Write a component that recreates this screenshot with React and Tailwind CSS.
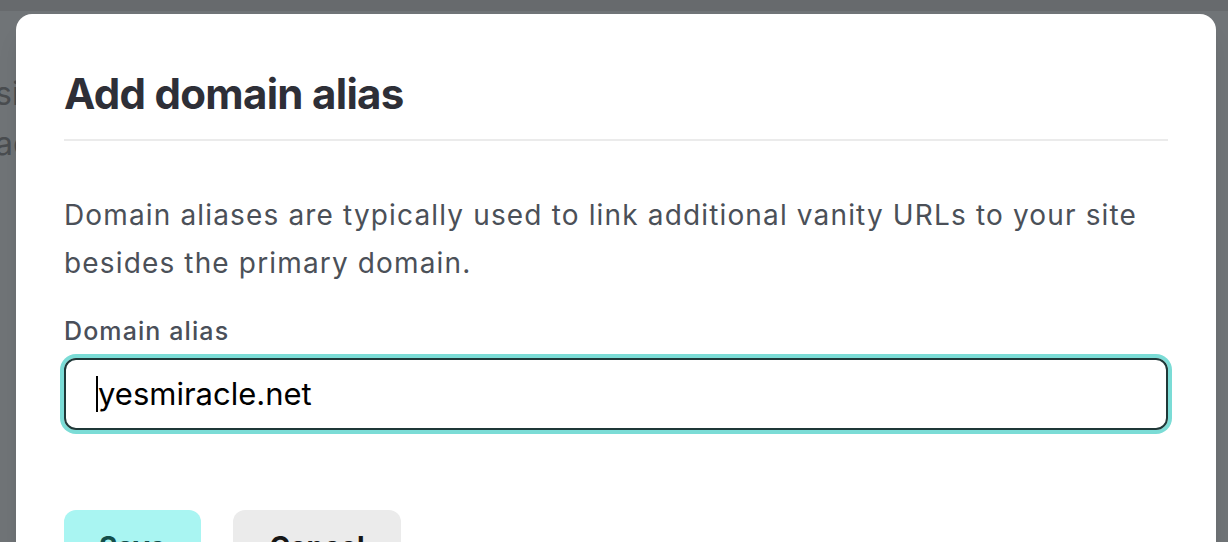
import React from "react";

const font = { fontFamily: "Inter, 'Noto Sans', sans-serif" };

const Backdrop = () => {
  return (
    <div className="absolute inset-0 bg-[#707477]">
      <div className="h-[11px] bg-[#676a6d]" />
      <div className="pt-[58px] text-[32px] leading-[50px] text-[#4a4d50] -ml-[5px]">
        <p>sil</p>
        <p>ac</p>
      </div>
    </div>
  );
};

const App = () => {
  return (
    <div className="relative w-full h-[542px] overflow-hidden" style={font}>
      <Backdrop />

      <div className="absolute left-[16px] right-[12px] top-[14px] h-[600px] bg-white rounded-[16px] px-[48px] pt-[55px] shadow-xl">
        <h2 className="text-[42px] leading-[50px] font-bold tracking-[-0.7px] text-[#2e2f37] pb-[20px] border-b-2 border-[#ebebeb]">
          Add domain alias
        </h2>

        <p className="mt-[50px] text-[28px] leading-[48px] tracking-[1.15px] text-[#4b5058]">
          Domain aliases are typically used to link additional vanity URLs to your site besides the primary domain.
        </p>

        <label className="block mt-[26px] text-[25px] leading-[36px] font-medium tracking-[1.1px] text-[#4a4f59]">
          Domain alias
        </label>

        <div className="mt-[9px] h-[72px] flex items-center rounded-[12px] border-2 border-[#1f3838] ring-4 ring-[#7bdcd6] pl-[30px]">
          <span className="w-[2px] h-[36px] bg-black" />
          <span className="text-[31px] text-black">yesmiracle.net</span>
        </div>

        <div className="mt-[80px] flex gap-[32px]">
          <button className="w-[137px] h-[64px] rounded-[12px] bg-[#a9f5f2] text-[#134e4a] text-[28px] font-bold flex justify-center items-start pt-[16px]">
            Save
          </button>
          <button className="w-[168px] h-[64px] rounded-[12px] bg-[#ebebeb] text-[#151515] text-[28px] font-bold flex justify-center items-start pt-[16px]">
            Cancel
          </button>
        </div>
      </div>
    </div>
  );
};

export default App;
